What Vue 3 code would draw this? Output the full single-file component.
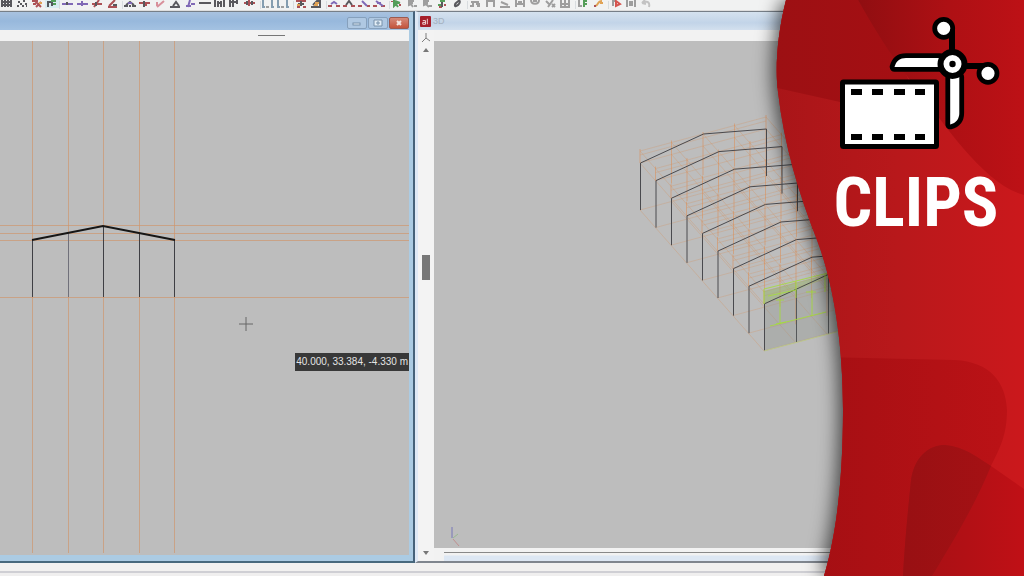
<script setup>
const K = '#34343a'
const R = '#9c2a30'
const P = '#6448a8'
const G = '#8a8a8a'
const N = '#2f8a34'
const O = '#dc9030'

const grid = 'M2 0V7M5 0V7M8 0V7M11 0V7M1 2H12M1 5H12'
const dots = 'M3 2H5M8 1H10M5 4H7M10 4H12M2 6H4M7 6H9M11 6H12'
const bars = 'M2 0V7M5 0V7M2 2H9M9 0V4'
const truss = 'M1 6H5M9 6H13M3 5L7 2L11 5M6 6H8'

const groups = [
  [
    [[grid, K]],
    [[dots, K]],
    [['M2 1H8M3 4H6', R], ['M5 1L11 7M11 2L6 7', R], ['M9 3H12', O]],
    [['M3 7V2H7V6', K], ['M6 1H11M8 4H11', N]]
  ],
  [
    [['M2 4H13', P], ['M7 2V5', K]],
    [['M2 4H13M7 1V6', P]],
    [['M2 4H12M4 7L9 0', R], ['M6 2V6', K]],
    [['M3 7H12M4 6L10 0', R], ['M8 5H12', K]]
  ],
  [
    [[truss, K], ['M5 3H9', P]],
    [['M1 3H12M5 5H9', R], ['M6 1V7', K]],
    [['M4 7L11 1M4 2V6', '#d27886']],
    [['M2 7H12M5 6L8 2L11 6', K]],
    [['M3 6H8M7 0L5 7M8 4H12', P]],
    [['M1 3H13M3 2V4M7 2V4M11 2V4', K]],
    [['M2 0V7M11 0V7M5 1V7M8 1V7M5 3H8', K]],
    [[bars, K]],
    [['M1 3H12M6 0V6', R], ['M4 1V5M9 1V5', K]]
  ],
  [
    [['M2 0V6M11 0V6M1 7H4M10 7H13', '#6a88a0'], ['M5 7H8', G]],
    [['M2 0V6M11 0V6M1 7H4M10 7H13', '#6a88a0'], ['M5 7H8', G]]
  ],
  [
    [['M2 1H12M3 7H6M9 7H12', R], ['M4 4H10M7 1V6', K], ['M3 5H6', O]],
    [['M2 7H12M4 5L8 1H11V7', K], ['M6 3H10M5 5H9', O]]
  ],
  [
    [['M1 6H5M9 6H13', R], ['M4 4L7 2L10 4', P]],
    [['M1 6H5M9 6H13', R], ['M4 5L7 1L10 5', K]],
    [['M1 6H5M10 6H13', R], ['M5 1L10 6', P]],
    [['M1 6H5M9 6H13', R], ['M4 1L11 6M5 3H9', P]]
  ],
  [
    [['M4 0V6L6 4L8 7M5 1L10 3M5 3H9', N], ['M2 1V2M9 5H11', R]],
    [['M4 0V5L6 4L8 7M5 1H9M5 3H8', G], ['M9 6H12', G]],
    [['M4 0V5L6 4L9 7M5 1H9M5 3H8', G], ['M9 6H12', G]],
    [['M3 5H6M5 1H10', N], ['M9 5H11M4 7H7', R], ['M7 2V7', K]],
    [['M9 0C12 4 5 7 5 6C4 2 8 3 9 0', K]]
  ],
  [
    [['M2 6H6M8 4H12M3 2H11M9 6H12', G], ['M5 1V5', G]],
    [['M3 1H12M4 1V7M11 1V7', G]],
    [['M2 7H12M3 2L10 5', G]],
    [['M3 0V7M11 0V7M3 4H11M5 2H9', G]],
    [['M3 0C3 5 11 5 11 0M5 1H9', G]],
    [['M3 1L6 4M10 0L5 7M9 4L12 7M12 4L9 7', G]],
    [['M3 0V7H11V0M3 4H11M7 0V7', G]]
  ],
  [
    [['M3 0V6H6', G], ['M7 1H11M7 4H11M8 0V7', N]],
    [['M4 6C8 5 6 1 11 1', O], ['M3 6H5', R], ['M9 3H12', O]]
  ],
  [
    [['M3 1H6M4 0V6', G], ['M7 1L11 4L7 6Z', '#cf2f28']],
    [['M3 0V7M6 1V6M8 1V6M11 0V7', G]],
    [['M3 3L6 0M3 3L7 4M4 3C9 0 11 3 10 7', '#b8b8b8']]
  ]
]

const axes = [32, 68, 103, 139, 174]
const levels = [225, 233, 240, 297]
const verticals = axes.map((x) => `M${x}.5 41V553`).join('')
const horizontals = levels.map((y) => `M0 ${y}.5H409`).join('')

const dx = 15.5
const dy = 17.6
const frames = Array.from({ length: 9 }, (_, i) => [i * dx, i * dy])
const points = (x, y) => `${x},${y}`
const framePath = ([x, y]) =>
  'M' + points(640.5 + x, 210 + y) + 'L' + points(640.5 + x, 163 + y) +
  'L' + points(703.5 + x, 134 + y) + 'L' + points(766.5 + x, 129 + y) +
  'V' + (176 + y)

const guides = frames.map(([x, y]) => {
  let d = ''
  for (const h of [151, 155, 163, 210]) {
    d += 'M' + points(640 + x, h + y) + 'L' + points(766 + x, h - 34 + y)
  }
  return d
}).join('')

const posts = frames.map(([x, y]) => {
  let d = ''
  for (let k = 0; k < 5; k++) {
    const px = 640 + x + k * 31.5
    const py = y - k * 8.5
    d += 'M' + points(px, 149 + py) + 'V' + ((k ? 192 : 163) + py)
  }
  return d
}).join('')

const runs = [0, 1, 2, 3, 4].flatMap((k) =>
  [151, 163, 210].map((h) => 'M' + points(640 + k * 31.5, h - k * 8.5) + 'l124,141')
).join('')
</script>

<template>
  <main class="screen">
    <nav class="toolbar" aria-label="Tools">
      <div v-for="(group, g) in groups" :key="g" class="group">
        <button v-for="(icon, i) in group" :key="i" type="button" class="tool" :aria-label="'Tool ' + (g + 1) + '.' + (i + 1)">
          <svg viewBox="0 0 14 8" aria-hidden="true">
            <path v-for="(p, n) in icon" :key="n" :d="p[0]" :stroke="p[1]" />
          </svg>
        </button>
      </div>
    </nav>

    <div class="workspace">
      <section class="window active">
        <header class="titlebar">
          <button type="button" class="winbtn" aria-label="Minimise">
            <svg viewBox="0 0 18 10"><rect x="5" y="5" width="7" height="2" /></svg>
          </button>
          <button type="button" class="winbtn" aria-label="Restore">
            <svg viewBox="0 0 18 10"><path d="M5 2H13V8H5Z M8 4H10V6H8Z" /></svg>
          </button>
          <button type="button" class="winbtn close" aria-label="Close">
            <svg viewBox="0 0 18 10"><path d="M7 3L11 7M11 3L7 7" /></svg>
          </button>
        </header>
        <div class="strip"><span class="slide"></span></div>
        <div class="canvas">
          <svg viewBox="0 41 409 514" preserveAspectRatio="xMinYMin slice">
            <g stroke="#d09468" stroke-opacity=".65">
              <path :d="verticals" />
              <path :d="horizontals" />
            </g>
            <path v-for="x in axes" :key="x" :d="`M${x}.5 ${x === 103 ? 226 : x === 32 || x === 174 ? 240 : 233}V297`" :stroke="x === 68 ? '#70707a' : '#3f3f44'" />
            <path d="M32 240L103 226L175 240" fill="none" stroke="#161616" stroke-width="2" />
            <path d="M239 324H253M246 317V331" stroke="#666" />
          </svg>
          <output class="coords">40.000, 33.384, -4.330 m</output>
        </div>
      </section>

      <section class="window view">
        <header class="titlebar">
          <svg class="logo" viewBox="0 0 12 12" aria-hidden="true">
            <rect width="12" height="12" rx="1" fill="#a51f2b" />
            <path d="M3 5H6V9H3V7H6M8 3V9" fill="none" stroke="#f3dede" />
          </svg>
          <span>3D</span>
        </header>
        <div class="body">
          <div class="rail">
            <svg class="tripod" viewBox="0 0 10 10" aria-hidden="true"><path d="M5 0V5L1 9M5 5L9 8" /></svg>
            <button type="button" class="arrow" aria-label="Scroll up"><svg viewBox="0 0 6 6"><path d="M3 1L6 5H0Z" /></svg></button>
            <i class="before"></i>
            <i class="thumb"></i>
            <i class="after"></i>
            <button type="button" class="arrow" aria-label="Scroll down"><svg viewBox="0 0 6 6"><path d="M3 5L6 1H0Z" /></svg></button>
          </div>
          <div class="plane">
            <div class="strip"></div>
            <div class="canvas">
              <svg viewBox="434 41 590 509" preserveAspectRatio="xMinYMin slice">
                <g fill="none">
                  <path :d="guides" stroke="#d98a50" stroke-opacity=".32" stroke-width=".8" />
                  <path :d="runs" stroke="#d98a50" stroke-opacity=".36" stroke-width=".8" />
                  <path :d="posts" stroke="#e08a4c" stroke-opacity=".5" />
                  <path d="M764 291L840 271V331L764 351Z" fill="#909590" fill-opacity=".38" />
                  <path d="M764 291L840 271V272L764 304Z" fill="#a0dc3c" fill-opacity=".22" />
                  <path v-for="(f, i) in frames" :key="i" :d="framePath(f)" stroke="#4a4a4e" />
                  <path d="M796.5 290V342M828.5 276V334" stroke="#55585a" />
                  <path d="M764 289L840 270M764 289V304M770 326L826 312M776 300H784M780 300V324M776 324L786 322M806 292H816M812 290V316M796 281V298M825 274V292M768 296L796 290" stroke="#a4dc3c" stroke-opacity=".85" />
                  <path d="M764 351L840 331" stroke="#bcc68c" />
                  <path d="M452 527V538" stroke="#7676b8" />
                  <path d="M453 538L458 534" stroke="#98b890" />
                  <path d="M453 539L459 546" stroke="#c09090" />
                </g>
              </svg>
            </div>
            <div class="hscroll"></div>
          </div>
        </div>
      </section>
    </div>
    <footer class="status"></footer>

    <aside class="banner">
      <svg class="backdrop" viewBox="768 0 256 576" preserveAspectRatio="none" aria-hidden="true">
        <defs>
          <linearGradient id="base" x1="0" y1="0" x2="1" y2="0">
            <stop offset="0" stop-color="#a81518" />
            <stop offset=".5" stop-color="#b8181b" />
            <stop offset="1" stop-color="#cb181c" />
          </linearGradient>
          <linearGradient id="top" x1="0" y1="0" x2="1" y2="0">
            <stop offset="0" stop-color="#9c1013" />
            <stop offset="1" stop-color="#a60f13" />
          </linearGradient>
          <linearGradient id="corner" x1="0" y1="0" x2="1" y2="0">
            <stop offset="0" stop-color="#900e11" />
            <stop offset=".55" stop-color="#ae1014" />
            <stop offset="1" stop-color="#bd1116" />
          </linearGradient>
          <linearGradient id="lobe" x1="0" y1="0" x2="1" y2="0">
            <stop offset="0" stop-color="#a30f13" />
            <stop offset="1" stop-color="#bb1216" />
          </linearGradient>
          <linearGradient id="foot" x1="0" y1="0" x2="1" y2="0">
            <stop offset="0" stop-color="#a31014" />
            <stop offset="1" stop-color="#c01016" />
          </linearGradient>
          <linearGradient id="overlap" x1="0" y1="0" x2="1" y2="0">
            <stop offset="0" stop-color="#981013" />
            <stop offset="1" stop-color="#a51114" />
          </linearGradient>
          <clipPath id="wave">
            <path d="M786 0C777 35 775 70 778 92C784 145 799 194 817 240C834 285 843 345 843 410C843 470 838 530 824 576H1024V0Z" />
          </clipPath>
        </defs>
        <path class="shade" d="M786 0C777 35 775 70 778 92C784 145 799 194 817 240C834 285 843 345 843 410C843 470 838 530 824 576H1024V0Z" fill="#a81518" />
        <g clip-path="url(#wave)">
          <rect x="768" width="256" height="576" fill="url(#base)" />
          <path d="M768 86L840 102L925 118L900 60L858 0H768Z" fill="url(#top)" />
          <path d="M858 0C878 35 895 62 918 90C945 125 985 185 1024 195V0Z" fill="url(#corner)" />
          <path d="M820 357L955 360C990 362 1006 382 1007 410C1007 435 1000 448 991 466C977 500 960 530 932 576H800Z" fill="url(#lobe)" />
          <path d="M903 576C905 540 908 510 911 480C915 455 930 445 945 445C965 447 975 456 991 466L1024 489V576Z" fill="url(#foot)" />
          <path d="M903 576C905 540 908 510 911 480C915 455 930 445 945 445C965 447 975 456 991 466C977 500 960 530 932 576Z" fill="url(#overlap)" />
        </g>
      </svg>
      <div class="brand">
        <svg class="clip" viewBox="838 15 164 136" aria-hidden="true">
          <rect x="842.5" y="82" width="94" height="64.5" rx="1" fill="#fff" stroke="#000" stroke-width="5" />
          <path d="M851 89h11v6h-11zM872 89h11v6h-11zM894 89h11v6h-11zM915 89h10v6h-10zM851 134h11v6h-11zM872 134h11v6h-11zM894 134h11v6h-11zM915 134h10v6h-10z" />
          <g fill="#fff" stroke="#000" stroke-linejoin="round">
            <path d="M952 28V64M952 66H988" stroke-width="6" />
            <circle cx="943.7" cy="28.3" r="9" stroke-width="4.8" />
            <circle cx="988" cy="73.3" r="9" stroke-width="4.8" />
            <g class="blade" stroke-width="9.6">
              <path d="M894.5 67C896 61 900 58 906 58H940V67Z" />
              <path d="M950.2 77H959.3V113C959.3 119 956 123 950.2 124.5Z" />
            </g>
            <circle cx="952.5" cy="64" r="12" stroke-width="6" />
            <circle cx="952.5" cy="64" r="3.2" fill="#000" stroke="none" />
          </g>
        </svg>
        <h1>CLIPS</h1>
      </div>
    </aside>
  </main>
</template>

<style>
body { margin: 0; }
</style>

<style scoped>
* { box-sizing: border-box; }
.screen {
  position: relative;
  display: flex;
  flex-direction: column;
  height: 100vh;
  overflow: hidden;
  background: #f1f1f1;
  font-family: "Liberation Sans", sans-serif;
}
svg { display: block; }
button { margin: 0; padding: 0; border: 0; background: none; }
.toolbar { display: flex; gap: 3px; height: 11px; flex: none; background: #f1f2f2; border-bottom: 1px solid #dedede; }
.group { display: flex; flex: none; box-shadow: -2px 0 0 -1px #d8dcdf; }
.group:nth-child(2) { margin-left: -3px; }
.tool { width: 15px; height: 8px; }
.group:first-child .tool:last-child { background: #d9edf2; }
.tool svg { width: 14px; height: 8px; fill: none; stroke-width: 2; opacity: .8; }
.workspace { display: grid; grid-template-columns: 415fr 609fr; flex: 1; min-height: 0; }
.window { display: flex; flex-direction: column; min-width: 0; min-height: 0; border-top: 1px solid #777f88; }
.active { border-right: 2px solid #46627a; border-bottom: 2px solid #48697d; background: #abcbe3; padding: 0 4px 6px 0; }
.titlebar { display: flex; align-items: center; gap: 1px; height: 18px; flex: none; }
.active .titlebar { justify-content: flex-end; align-items: flex-end; padding-bottom: 1px; background: linear-gradient(#a9c2df, #97b8dc 50%, #a4c2e2); }
.winbtn { width: 20px; height: 12px; border: 1px solid #86a0bc; border-radius: 2px; background: #afc8e2; }
.winbtn svg { width: 18px; height: 10px; fill: #e2edf6; stroke: #7790aa; stroke-width: 1; }
.winbtn.close { background: linear-gradient(#d58a7a, #c4543c); border-color: #9c5a50; }
.winbtn.close svg { stroke: #f4e4e0; stroke-width: 2; }
.strip { height: 11px; flex: none; background: #f2f2f2; }
.active .strip { display: flex; align-items: center; padding-left: 63%; }
.slide { width: 27px; height: 1px; background: #777; }
.canvas { position: relative; flex: 1; min-height: 0; background: #bdbdbd; overflow: hidden; }
.canvas svg { width: 100%; height: 100%; }
.coords {
  position: absolute;
  right: 0;
  top: 312px;
  padding: 0 1px;
  background: #383838;
  color: #e4e4e4;
  font-size: 10px;
  line-height: 18px;
  white-space: nowrap;
}
.view { border-left: 3px solid #dfe9f6; border-bottom: 2px solid #80868e; background: #f2f2f2; }
.view .titlebar { padding-left: 2px; gap: 2px; background: linear-gradient(#d5e2ef, #c2d4e8 60%, #d3e0ee); font-size: 9px; color: #a5b1bf; }
.logo { width: 11px; height: 11px; }
.body { display: flex; flex: 1; min-height: 0; }
.rail { display: flex; flex-direction: column; align-items: center; width: 16px; padding: 3px 0 5px; background: #f3f3f3; }
.tripod { width: 10px; height: 10px; flex: none; fill: none; stroke: #7d7d7d; }
.arrow { width: 6px; height: 6px; margin-top: 4px; flex: none; }
.arrow svg { width: 6px; height: 6px; fill: #777; }
.arrow:last-child { margin: 0; }
.before { flex: 202; }
.thumb { width: 8px; height: 25px; background: #777; }
.after { flex: 271; }
.plane { display: flex; flex-direction: column; flex: 1; min-width: 0; background: #f2f2f2; }
.hscroll { height: 9px; margin: 4px 0 0 10px; flex: none; background: linear-gradient(#888 1px, #f2f2f2 1px, #f2f2f2 3px, #dde7f3 4px); }
.status { height: 13px; flex: none; background: linear-gradient(#f2f1f0 8px, #cfcfd4 8px, #cfcfd4 10px, #f0efef 10px); }
.banner { position: absolute; top: 0; right: 0; width: 25%; height: 100%; }
.backdrop { position: absolute; inset: 0; width: 100%; height: 100%; overflow: visible; }
.shade { filter: drop-shadow(-4px 0 9px rgba(0, 0, 0, .65)); }
.brand { position: relative; display: flex; flex-direction: column; align-items: center; padding: 15px 0 0 40px; }
.clip { width: 164px; height: 136px; margin-left: 8px; }
.blade { paint-order: stroke; }
h1 { margin: 12px 0 0; color: #fff; font: bold 68px/80px "Roboto Condensed", "Liberation Sans Narrow", Roboto, sans-serif; }
</style>
